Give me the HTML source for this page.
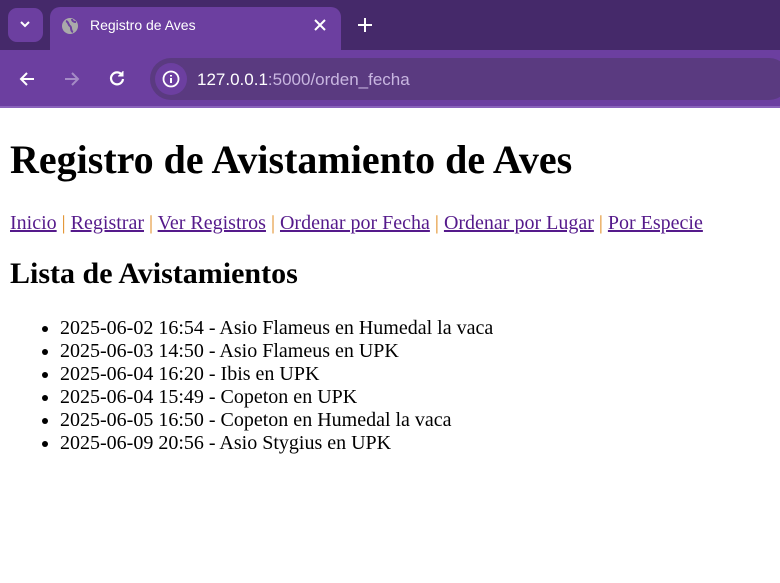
<!DOCTYPE html>
<html><head><style>
body{margin:0;width:780px;height:583px;overflow:hidden;background:#fff;font-family:"Liberation Serif",serif;}
.top{position:absolute;left:0;top:0;width:780px;height:50px;background:#45296a;}
.tb{position:absolute;left:0;top:50px;width:780px;height:56px;background:#6c3fa0;}
.line{position:absolute;left:0;top:106px;width:780px;height:2px;background:#8a63bb;}
.tab{position:absolute;left:50px;top:7px;width:291px;height:45px;background:#6c3fa0;border-radius:10px 10px 0 0;}
.dd{position:absolute;left:8px;top:8px;width:35px;height:34px;background:#6c3fa0;border-radius:9px;}
.addr{position:absolute;left:150px;top:58px;width:640px;height:42px;background:#5a3a80;border-radius:21px;}
.info{position:absolute;left:155px;top:63px;width:32px;height:32px;border-radius:16px;background:#6c3fa0;}
.t{position:absolute;font-family:"Liberation Sans",sans-serif;color:#fff;}
.page{position:absolute;left:0;top:108px;width:780px;padding:0 10px;box-sizing:border-box;}
h1{font-size:40px;margin:29px 0 29px;line-height:46px;}
h2{font-size:30px;margin:22px 0 26px;line-height:34px;}
p{margin:20px 0 0;font-size:20px;line-height:23px}
a{color:#551a8b;}
.s{color:#e08a1e;}
ul{margin:0;padding-left:50px;font-size:20px;line-height:23px;}
</style></head><body>
<div class="top"></div>
<div class="dd"></div>
<svg style="position:absolute;left:19px;top:19px" width="12" height="10"><path d="M2 3l4 4 4-4" stroke="#fff" stroke-width="2" fill="none"/></svg>
<div class="tab"></div>
<svg style="position:absolute;left:61px;top:17px" width="18" height="18"><circle cx="9" cy="9" r="8" fill="#aaa"/><path d="M5 4c3 1 2 4 4 5s0 5 3 6M11 2c0 2 2 3 4 3" stroke="#6c3fa0" stroke-width="2" fill="none"/></svg>
<div class="t" style="left:90px;top:17px;font-size:14px">Registro de Aves</div>
<svg style="position:absolute;left:313px;top:18px" width="14" height="14"><path d="M2 2l10 10M12 2L2 12" stroke="#fff" stroke-width="2"/></svg>
<svg style="position:absolute;left:357px;top:17px" width="16" height="16"><path d="M8 1v14M1 8h14" stroke="#fff" stroke-width="2"/></svg>
<div class="tb"></div>
<svg style="position:absolute;left:18px;top:70px" width="18" height="18"><path d="M16 9H3M9 3L3 9l6 6" stroke="#fff" stroke-width="2" fill="none"/></svg>
<svg style="position:absolute;left:63px;top:70px" width="18" height="18"><path d="M2 9h13M9 3l6 6-6 6" stroke="#a58bc6" stroke-width="2" fill="none"/></svg>
<svg style="position:absolute;left:108px;top:69px" width="18" height="18"><path d="M14 6A6 6 0 1 0 15 10" stroke="#fff" stroke-width="2.2" fill="none"/><path d="M15 2v5h-5" fill="#fff" stroke="#fff" stroke-width="1"/></svg>
<div class="addr"></div>
<div class="info"></div>
<svg style="position:absolute;left:162px;top:70px" width="18" height="18"><circle cx="9" cy="9" r="7.5" stroke="#fff" stroke-width="1.8" fill="none"/><path d="M9 8v5M9 5v1.5" stroke="#fff" stroke-width="2"/></svg>
<div class="t" style="left:197px;top:70px;font-size:17px">127.0.0.1<span style="color:#c8b6e0">:5000/orden_fecha</span></div>
<div class="line"></div>
<div class="page">
<h1>Registro de Avistamiento de Aves</h1>
<p><a href="#">Inicio</a> <span class="s">|</span> <a href="#">Registrar</a> <span class="s">|</span> <a href="#">Ver Registros</a> <span class="s">|</span> <a href="#">Ordenar por Fecha</a> <span class="s">|</span> <a href="#">Ordenar por Lugar</a> <span class="s">|</span> <a href="#">Por Especie</a></p>
<h2>Lista de Avistamientos</h2>
<ul>
<li>2025-06-02 16:54 - Asio Flameus en Humedal la vaca</li>
<li>2025-06-03 14:50 - Asio Flameus en UPK</li>
<li>2025-06-04 16:20 - Ibis en UPK</li>
<li>2025-06-04 15:49 - Copeton en UPK</li>
<li>2025-06-05 16:50 - Copeton en Humedal la vaca</li>
<li>2025-06-09 20:56 - Asio Stygius en UPK</li>
</ul>
</div>
</body></html>
